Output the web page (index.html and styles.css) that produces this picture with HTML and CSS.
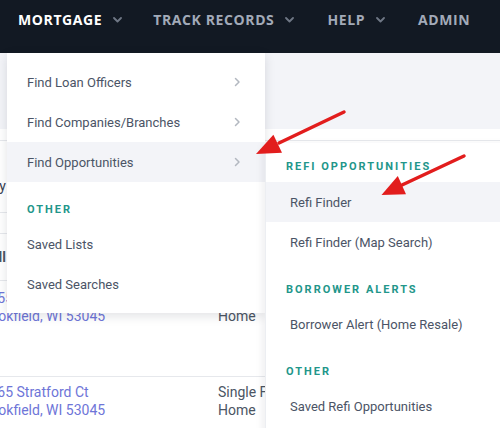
FILE: index.html
```html
<!DOCTYPE html>
<html>
<head>
<meta charset="utf-8">
<link rel="stylesheet" href="styles.css">
</head>
<body>
<nav class="topnav">
  <div class="nav-item active">MORTGAGE <svg class="chev" width="9" height="6" viewBox="0 0 9 6"><path d="M1 1l3.5 3.5L8 1"/></svg></div>
  <div class="nav-item">TRACK RECORDS <svg class="chev" width="9" height="6" viewBox="0 0 9 6"><path d="M1 1l3.5 3.5L8 1"/></svg></div>
  <div class="nav-item">HELP <svg class="chev" width="9" height="6" viewBox="0 0 9 6"><path d="M1 1l3.5 3.5L8 1"/></svg></div>
  <div class="nav-item">ADMIN</div>
</nav>
<main class="page">
  <div class="page-head"></div>
  <div class="table">
    <div class="row row-a"><div class="peek">By</div></div>
    <div class="row row-b"></div>
    <div class="row row-c"><div class="peek bold">All</div></div>
    <div class="row row-d">
      <div class="addr"><span>W155 Stratford Ct</span><span>Brookfield, WI 53045</span></div>
      <div class="type"><span>Single Family</span><span>Home</span></div>
    </div>
    <div class="row row-e">
      <div class="addr"><span>W165 Stratford Ct</span><span>Brookfield, WI 53045</span></div>
      <div class="type"><span>Single Family</span><span>Home</span></div>
    </div>
  </div>
</main>

<div class="menu">
  <div class="menu-item">Find Loan Officers <svg class="rchev" width="7" height="10" viewBox="0 0 7 10"><path d="M1.5 1.5L5 5l-3.5 3.5"/></svg></div>
  <div class="menu-item">Find Companies/Branches <svg class="rchev" width="7" height="10" viewBox="0 0 7 10"><path d="M1.5 1.5L5 5l-3.5 3.5"/></svg></div>
  <div class="menu-item hover">Find Opportunities <svg class="rchev" width="7" height="10" viewBox="0 0 7 10"><path d="M1.5 1.5L5 5l-3.5 3.5"/></svg></div>
  <div class="menu-head">OTHER</div>
  <div class="menu-item">Saved Lists</div>
  <div class="menu-item">Saved Searches</div>
</div>

<div class="submenu">
  <div class="menu-head first">REFI OPPORTUNITIES</div>
  <div class="menu-item hover">Refi Finder</div>
  <div class="menu-item">Refi Finder (Map Search)</div>
  <div class="menu-head">BORROWER ALERTS</div>
  <div class="menu-item">Borrower Alert (Home Resale)</div>
  <div class="menu-head">OTHER</div>
  <div class="menu-item">Saved Refi Opportunities</div>
</div>

<svg class="arrows" width="500" height="428" viewBox="0 0 500 428">
  <line x1="344" y1="112" x2="279" y2="143" class="shaft"/>
  <polygon points="256,154 282,152.7 273.4,134.7" class="head"/>
  <line x1="464" y1="156" x2="402" y2="185" class="shaft"/>
  <polygon points="381.5,195 406,194.2 397.8,176" class="head"/>
</svg>
</body>
</html>
```
FILE: styles.css
```css
* { box-sizing: border-box; }
html, body { margin: 0; padding: 0; }
body {
  width: 500px;
  height: 428px;
  overflow: hidden;
  position: relative;
  background: #fff;
  font-family: Roboto, "Liberation Sans", sans-serif;
}

.topnav {
  height: 53px;
  background: #121923;
  display: flex;
  align-items: flex-start;
  padding: 11px 0 0 18px;
  gap: 33px;
}
.nav-item {
  display: flex;
  align-items: center;
  gap: 11px;
  font-family: "Open Sans", "Liberation Sans", sans-serif;
  font-weight: 700;
  font-size: 14px;
  line-height: 18px;
  letter-spacing: 0.6px;
  color: #a2aab8;
  white-space: nowrap;
}
.nav-item.active { color: #fff; margin-right: -2px; }
.chev path {
  fill: none;
  stroke: #6f7785;
  stroke-width: 1.8;
  stroke-linecap: round;
  stroke-linejoin: round;
}

.page-head { height: 76px; background: #f3f4f8; }
.table { margin: 11px 0 0 -24px; width: 524px; }
.row { display: flex; border-top: 1px solid #e6e8ec; }
.row-a { height: 72px; align-items: flex-end; padding-bottom: 18px; }
.row-b { height: 21px; }
.row-c { height: 47px; align-items: center; }
.row-d { height: 96px; padding-top: 8px; }
.row-e { padding-top: 6px; }
.peek {
  width: 30px;
  text-align: right;
  font-size: 14px;
  color: #374151;
}
.peek.bold { font-weight: 700; color: #4b5563; }
.addr, .type {
  display: flex;
  flex-direction: column;
  font-size: 14px;
  line-height: 18px;
}
.addr { width: 242px; padding-left: 1px; color: #6e75d8; }
.type { color: #4b5563; }

.menu {
  position: absolute;
  left: 7px;
  top: 53px;
  width: 258px;
  background: #fff;
  padding: 9px 0 9px;
  box-shadow: 0 3px 10px rgba(20, 30, 50, 0.13);
}
.menu-item {
  height: 40px;
  display: flex;
  align-items: center;
  justify-content: space-between;
  padding: 0 24px 0 20px;
  font-size: 13px;
  color: #4b5466;
  white-space: nowrap;
}
.menu-item.hover { background: #f3f4f8; }
.rchev path {
  fill: none;
  stroke: #b3b8c0;
  stroke-width: 1.5;
  stroke-linecap: round;
  stroke-linejoin: round;
}
.menu-head {
  padding: 20px 20px 6px;
  font-size: 11px;
  line-height: 16px;
  font-weight: 700;
  letter-spacing: 2px;
  color: #22968a;
}
.menu-head.first { padding-top: 16px; padding-bottom: 7px; }

.submenu {
  position: absolute;
  left: 265px;
  top: 143px;
  width: 250px;
  height: 300px;
  background: #fff;
  border-left: 1px solid #eceef2;
  box-shadow: -2px 2px 8px rgba(20, 30, 50, 0.08);
}
.submenu .menu-head { padding-left: 20px; }
.submenu .menu-item { padding-left: 24px; }

.arrows {
  position: absolute;
  left: 0;
  top: 0;
  pointer-events: none;
}
.shaft { stroke: #e21d1d; stroke-width: 3.5; stroke-linecap: round; }
.head { fill: #e21d1d; }
```
